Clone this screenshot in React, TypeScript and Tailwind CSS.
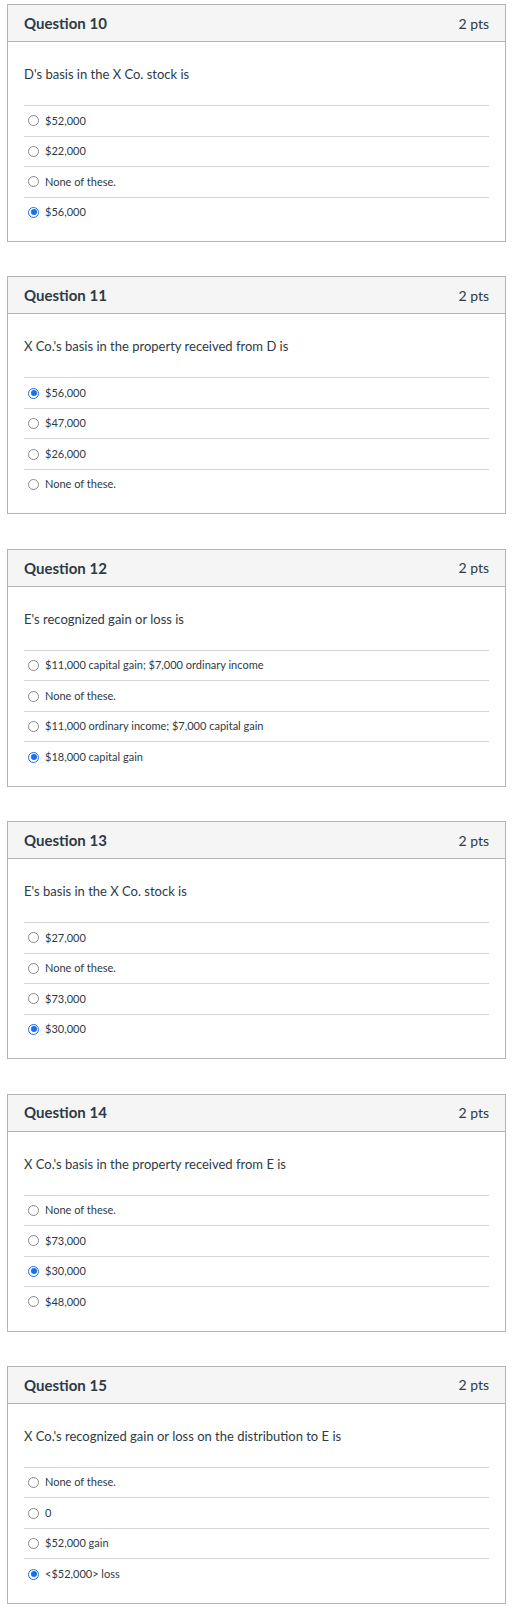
import React from "react";

type Q = { n: number; text: string; options: string[]; checked: number };

const questions: Q[] = [
  { n: 10, text: "D's basis in the X Co. stock is", options: ["$52,000", "$22,000", "None of these.", "$56,000"], checked: 3 },
  { n: 11, text: "X Co.'s basis in the property received from D is", options: ["$56,000", "$47,000", "$26,000", "None of these."], checked: 0 },
  { n: 12, text: "E's recognized gain or loss is", options: ["$11,000 capital gain; $7,000 ordinary income", "None of these.", "$11,000 ordinary income; $7,000 capital gain", "$18,000 capital gain"], checked: 3 },
  { n: 13, text: "E's basis in the X Co. stock is", options: ["$27,000", "None of these.", "$73,000", "$30,000"], checked: 3 },
  { n: 14, text: "X Co.'s basis in the property received from E is", options: ["None of these.", "$73,000", "$30,000", "$48,000"], checked: 2 },
  { n: 15, text: "X Co.'s recognized gain or loss on the distribution to E is", options: ["None of these.", "0", "$52,000 gain", "<$52,000> loss"], checked: 3 },
];

function Radio({ on }: { on: boolean }) {
  if (on) {
    return (
      <div className="w-[11px] h-[11px] rounded-full border border-[#1a6fe6] bg-white p-[1.5px] shrink-0">
        <div className="w-full h-full rounded-full bg-[#1a6fe6]" />
      </div>
    );
  }
  return <div className="w-[11px] h-[11px] rounded-full border border-[#8a8a8a] bg-white shrink-0" />;
}

function Card({ q }: { q: Q }) {
  return (
    <div className="w-[499px] h-[238px] border border-[#b4b4b4] bg-white mb-[34.4px] flex flex-col">
      <div className="h-[37px] bg-[#f5f5f5] border-b border-[#b4b4b4] px-[16px] flex items-center justify-between text-[#2d3b45]">
        <span className="font-bold text-[15px]">Question {q.n}</span>
        <span className="font-normal text-[14px]">2 pts</span>
      </div>
      <div className="px-[16px] pt-[22px]">
        <div className="text-[13px] leading-[20px] text-[#2d3b45]">{q.text}</div>
        <div className="mt-[21px]">
          {q.options.map((o, i) => (
            <div key={i} className="h-[30.5px] border-t border-[#d5d5d5] flex items-center pl-[4px] gap-[6px]">
              <Radio on={i === q.checked} />
              <span className="text-[11px] text-[#2d3b45]">{o}</span>
            </div>
          ))}
        </div>
      </div>
    </div>
  );
}

export default function App() {
  return (
    <div className="w-[516px] bg-white pt-[4px] pl-[7px]" style={{ fontFamily: "Lato, 'Liberation Sans', sans-serif" }}>
      {questions.map((q) => (
        <Card key={q.n} q={q} />
      ))}
    </div>
  );
}
